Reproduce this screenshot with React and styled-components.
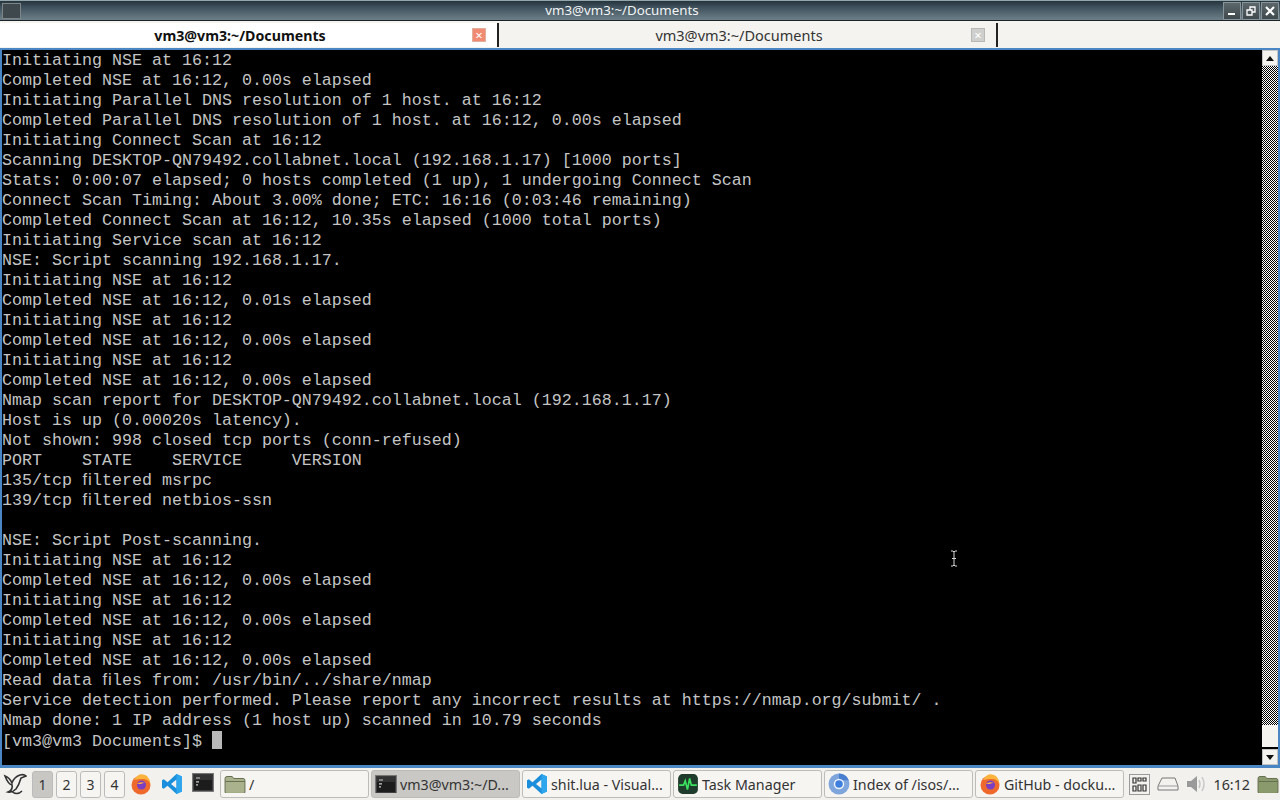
import React from "react";
import styled, { createGlobalStyle } from "styled-components";

const GlobalStyle = createGlobalStyle`
  html, body {
    margin: 0;
    padding: 0;
    background: #000;
    overflow: hidden;
  }
`;

// "ﬁ" is the single-cell ligature the terminal draws in these words
const LINES = [
  "Initiating NSE at 16:12",
  "Completed NSE at 16:12, 0.00s elapsed",
  "Initiating Parallel DNS resolution of 1 host. at 16:12",
  "Completed Parallel DNS resolution of 1 host. at 16:12, 0.00s elapsed",
  "Initiating Connect Scan at 16:12",
  "Scanning DESKTOP-QN79492.collabnet.local (192.168.1.17) [1000 ports]",
  "Stats: 0:00:07 elapsed; 0 hosts completed (1 up), 1 undergoing Connect Scan",
  "Connect Scan Timing: About 3.00% done; ETC: 16:16 (0:03:46 remaining)",
  "Completed Connect Scan at 16:12, 10.35s elapsed (1000 total ports)",
  "Initiating Service scan at 16:12",
  "NSE: Script scanning 192.168.1.17.",
  "Initiating NSE at 16:12",
  "Completed NSE at 16:12, 0.01s elapsed",
  "Initiating NSE at 16:12",
  "Completed NSE at 16:12, 0.00s elapsed",
  "Initiating NSE at 16:12",
  "Completed NSE at 16:12, 0.00s elapsed",
  "Nmap scan report for DESKTOP-QN79492.collabnet.local (192.168.1.17)",
  "Host is up (0.00020s latency).",
  "Not shown: 998 closed tcp ports (conn-refused)",
  "PORT    STATE    SERVICE     VERSION",
  "135/tcp \uFB01ltered msrpc",
  "139/tcp \uFB01ltered netbios-ssn",
  "",
  "NSE: Script Post-scanning.",
  "Initiating NSE at 16:12",
  "Completed NSE at 16:12, 0.00s elapsed",
  "Initiating NSE at 16:12",
  "Completed NSE at 16:12, 0.00s elapsed",
  "Initiating NSE at 16:12",
  "Completed NSE at 16:12, 0.00s elapsed",
  "Read data \uFB01les from: /usr/bin/../share/nmap",
  "Service detection performed. Please report any incorrect results at https://nmap.org/submit/ .",
  "Nmap done: 1 IP address (1 host up) scanned in 10.79 seconds",
];

const TerminalGlyph = ({ size = 22 }) => (
  <svg width={size} height={size * 0.86} viewBox="0 0 22 19">
    <rect x="0.5" y="0.5" width="21" height="18" fill="#3a3a3a" stroke="#777" />
    <rect x="2" y="2" width="18" height="15" fill="#1c1c1c" />
    <path d="M2 2h18v5H2z" fill="#333" />
    <path d="M4 5h4M4 9h3M4 12h2" stroke="#d0d0d0" strokeWidth="1.200" />
  </svg>
);

const FolderGlyph = ({ size = 22, dark }) => (
  <svg width={size} height={size * 0.86} viewBox="0 0 22 19">
    <path
      d="M1 3.500Q1 1.500 3 1.500h5l2 2h9q2 0 2 2V17q0 1.500-1.500 1.500h-17Q1 18.500 1 17z"
      fill={dark ? "#8a9a6c" : "#a9b28d"}
      stroke="#666e50"
    />
    <path d="M1.500 6.500h19.500" stroke="#666e50" />
  </svg>
);

const FirefoxGlyph = ({ size = 22 }) => (
  <svg width={size} height={size} viewBox="0 0 22 22">
    <circle cx="11" cy="12" r="9.500" fill="#f0692c" />
    <path d="M4 7Q9 -2 17 3Q20 6 20.500 11Q18 6 13 6Q8 6 4 7z" fill="#fbb33c" />
    <circle cx="11.500" cy="12" r="4.500" fill="#7b3fbf" />
    <path d="M7 11Q10 8 15 10Q13 9.500 11 11z" fill="#ffb13a" />
  </svg>
);

const VscodeGlyph = ({ size = 22 }) => (
  <svg width={size} height={size} viewBox="0 0 22 22">
    <path
      d="M15.500 1L21 3.500V18.500L15.500 21L6.500 12.800L2.800 15.700L1 14.800V7.200L2.800 6.300L6.500 9.200zM15.500 6.500L10 11L15.500 15.500z"
      fill="#1b8fdc"
    />
    <path d="M15.500 1L21 3.500V18.500L15.500 21z" fill="#2ea6ee" />
  </svg>
);

const ChromiumGlyph = () => (
  <svg width="22" height="22" viewBox="0 0 20 20">
    <circle cx="10" cy="10" r="9.500" fill="#7fa6dc" />
    <path d="M10 .5A9.500 9.500 0 0 1 18.800 6.500H10z" fill="#4a7fd0" />
    <circle cx="10" cy="10" r="4.800" fill="#eef3fb" />
    <circle cx="10" cy="10" r="3.400" fill="#3e7fde" />
  </svg>
);

const TaskManagerGlyph = () => (
  <svg width="22" height="22" viewBox="0 0 20 20">
    <rect x="1" y="1" width="18" height="18" rx="4" fill="#1f3b2b" />
    <path d="M2 11h4l1.500-4 2 8 2-10 1.500 6h5" stroke="#3ce05f" strokeWidth="1.500" fill="none" />
  </svg>
);

const StartGlyph = () => (
  <svg width="24" height="26" viewBox="0 0 24 26" fill="none" stroke="#333" strokeWidth="1.600">
    <path d="M2 5Q7 7 9 12Q11 6 17 4Q21 3 23 5L18 7Q16 14 13 18Q9 22 5 21Q10 19 9 14Q5 13 2 5z" />
    <path d="M8 20Q14 25 19 20" />
  </svg>
);

const KeyboardGlyph = () => (
  <svg width="21" height="21" viewBox="0 0 21 21">
    <rect x="0.500" y="0.500" width="20" height="20" fill="#f4f2ee" stroke="#9a9a9a" />
    <path d="M4 4h3v5H4zM9 4h3v3H9zM14 4h3v3h-3zM4 12h3v5H4zM9 11h3v6H9zM14 11h3v6h-3z" fill="none" stroke="#333" strokeWidth="1.200" />
  </svg>
);

const TrayGlyph = () => (
  <svg width="22" height="14" viewBox="0 0 22 14">
    <path d="M5 1h13l3 8v4H1V9z" fill="#f4f2ee" stroke="#777" />
    <path d="M1 9h20" stroke="#999" />
  </svg>
);

const VolumeGlyph = () => (
  <svg width="21" height="20" viewBox="0 0 21 20">
    <path d="M1 7h4l6-5v16l-6-5H1z" fill="#9a9a9a" />
    <path d="M13 6q2 4 0 8M16 3q4 7 0 14" stroke="#c7c7c7" strokeWidth="1.500" fill="none" />
  </svg>
);

const App = () => (
  <Screen>
    <GlobalStyle />
    <TitleBar>
      <WindowIcon />
      <WindowTitle>vm3@vm3:~/Documents</WindowTitle>
      <WindowButtons>
        <WindowButton>
          <svg width="10" height="10" viewBox="0 0 10 10">
            <path d="M1 8h7" stroke="#fff" strokeWidth="2" />
          </svg>
        </WindowButton>
        <WindowButton>
          <svg width="10" height="10" viewBox="0 0 10 10" fill="none" stroke="#fff" strokeWidth="1.300">
            <path d="M1 4h5v5H1zM4 4V1h5v5H6" />
          </svg>
        </WindowButton>
        <WindowButton>
          <svg width="10" height="10" viewBox="0 0 10 10">
            <path d="M1 1l8 8M9 1l-8 8" stroke="#fff" strokeWidth="2.200" />
          </svg>
        </WindowButton>
      </WindowButtons>
    </TitleBar>

    <TabBar>
      <Tab $active>
        <TabLabel $active>vm3@vm3:~/Documents</TabLabel>
        <TabClose $active>×</TabClose>
      </Tab>
      <Tab>
        <TabLabel>vm3@vm3:~/Documents</TabLabel>
        <TabClose>×</TabClose>
      </Tab>
    </TabBar>

    <TerminalFrame>
      <Output>
        {LINES.map((line, i) => (
          <Line key={i}>{line}</Line>
        ))}
        <Line>
          [vm3@vm3 Documents]$ <Caret />
        </Line>
      </Output>
      <Scrollbar>
        <ScrollButton>
          <svg width="8" height="5" viewBox="0 0 8 5">
            <path d="M0 5L4 0l4 5z" fill="#111" />
          </svg>
        </ScrollButton>
        <ScrollTrack>
          <ScrollThumb />
        </ScrollTrack>
        <ScrollButton>
          <svg width="8" height="5" viewBox="0 0 8 5">
            <path d="M0 0l4 5 4-5z" fill="#111" />
          </svg>
        </ScrollButton>
      </Scrollbar>
      <MouseCursor width="8" height="17" viewBox="0 0 8 17">
        <path d="M1 1h2l1 1 1-1h2M4 2v13M1 16h2l1-1 1 1h2M2 8.500h4" stroke="#d8d8d8" fill="none" />
      </MouseCursor>
    </TerminalFrame>

    <Taskbar>
      <StartButton>
        <StartGlyph />
      </StartButton>
      <Pager>
        {[1, 2, 3, 4].map((n) => (
          <PagerButton key={n} $active={n === 1}>
            {n}
          </PagerButton>
        ))}
      </Pager>
      <Launchers>
        <Launcher>
          <FirefoxGlyph />
        </Launcher>
        <Launcher>
          <VscodeGlyph />
        </Launcher>
        <Launcher>
          <TerminalGlyph />
        </Launcher>
      </Launchers>
      <TaskList>
        <Task>
          <FolderGlyph />
          <TaskText>/</TaskText>
        </Task>
        <Task $active>
          <TerminalGlyph />
          <TaskText>vm3@vm3:~/D...</TaskText>
        </Task>
        <Task>
          <VscodeGlyph />
          <TaskText>shit.lua - Visual...</TaskText>
        </Task>
        <Task>
          <TaskManagerGlyph />
          <TaskText>Task Manager</TaskText>
        </Task>
        <Task>
          <ChromiumGlyph />
          <TaskText>Index of /isos/...</TaskText>
        </Task>
        <Task>
          <FirefoxGlyph />
          <TaskText>GitHub - docku...</TaskText>
        </Task>
      </TaskList>
      <Tray>
        <KeyboardGlyph />
        <TrayGlyph />
        <VolumeGlyph />
        <Clock>16:12</Clock>
        <FolderGlyph dark />
      </Tray>
    </Taskbar>
  </Screen>
);

const Screen = styled.div`
  width: 1280px;
  height: 800px;
  display: flex;
  flex-direction: column;
  overflow: hidden;
  background: #f2f1ee;
  font-family: "Noto Sans", sans-serif;
`;

const TitleBar = styled.div`
  height: 21px;
  flex: none;
  display: flex;
  align-items: center;
  background: linear-gradient(#26343d 0%, #3d4f5a 30%, #6d8089 100%);
  border-top: 1px solid #93a6ac;
  border-bottom: 1px solid #1a2226;
  box-sizing: border-box;
`;

const WindowIcon = styled.div`
  width: 19px;
  height: 16px;
  margin-left: 2px;
  flex: none;
  background: #3f484c;
  border: 1px solid #7c8689;
  box-sizing: border-box;
`;

const WindowTitle = styled.div`
  flex: 1;
  text-align: center;
  color: #f2f4f5;
  font-size: 13.3px;
  line-height: 19px;
`;

const WindowButtons = styled.div`
  display: flex;
  gap: 1px;
  padding-right: 1px;
`;

const WindowButton = styled.div`
  width: 18px;
  height: 18px;
  display: flex;
  align-items: center;
  justify-content: center;
  background: linear-gradient(#5c676c, #3f494e);
  border: 1px solid #87949a;
  box-sizing: border-box;
`;

const TabBar = styled.div`
  height: 27px;
  flex: none;
  display: flex;
  background: #f4f3f0;
`;

const Tab = styled.div`
  width: 499px;
  height: 24px;
  margin: 2px 0 1px;
  padding-left: 8px;
  box-sizing: border-box;
  display: flex;
  align-items: center;
  background: ${(p) => (p.$active ? "#ffffff" : "#f4f3f0")};
  border-right: 2px solid #222;
`;

const TabLabel = styled.div`
  flex: 1;
  text-align: center;
  font-size: ${(p) => (p.$active ? "14.2px" : "14.5px")};
  font-weight: ${(p) => (p.$active ? 700 : 400)};
  color: ${(p) => (p.$active ? "#111" : "#333")};
`;

const TabClose = styled.div`
  width: 14px;
  height: 14px;
  margin-left: 0;
  margin-right: 11px;
  flex: none;
  display: flex;
  align-items: center;
  justify-content: center;
  font-size: 13px;
  line-height: 14px;
  box-sizing: border-box;
  color: #fff;
  background: ${(p) => (p.$active ? "#f08a72" : "#cfcfcd")};
  border: 1px solid ${(p) => (p.$active ? "#e0b09c" : "#b8b8b6")};
`;

const TerminalFrame = styled.div`
  flex: 1;
  min-height: 0;
  display: flex;
  position: relative;
  background: #000;
  border: 2px solid #4a86c4;
  border-bottom-width: 3px;
  box-sizing: border-box;
`;

const Output = styled.div`
  flex: 1;
  min-width: 0;
  overflow: hidden;
  padding-top: 1px;
  color: #c4c4c4;
  font-family: "Liberation Mono", monospace;
  font-size: 16.67px;
  line-height: 20px;
`;

const Line = styled.div`
  height: 20px;
  white-space: pre;
`;

const Caret = styled.span`
  display: inline-block;
  width: 10px;
  height: 18px;
  vertical-align: -3px;
  background: #b8b8b8;
`;

const Scrollbar = styled.div`
  width: 16px;
  flex: none;
  display: flex;
  flex-direction: column;
`;

const ScrollButton = styled.div`
  height: 16px;
  flex: none;
  display: flex;
  align-items: center;
  justify-content: center;
  background: #f4f3f0;
  border: 1px solid #c4c4c4;
  box-sizing: border-box;
`;

const ScrollTrack = styled.div`
  flex: 1;
  display: flex;
  flex-direction: column;
  justify-content: flex-end;
  background: conic-gradient(#fff 25%, #000 0 50%, #fff 0 75%, #000 0) 0 0 / 2px 2px;
`;

const ScrollThumb = styled.div`
  height: 22px;
  background: #f4f3f0;
  border-bottom: 2px solid #000;
`;

const MouseCursor = styled.svg`
  position: absolute;
  left: 948px;
  top: 500px;
`;

const Taskbar = styled.div`
  height: 32px;
  flex: none;
  display: flex;
  align-items: center;
  background: #f2f1ee;
  padding: 2px 0;
  box-sizing: border-box;
`;

const StartButton = styled.div`
  width: 30px;
  flex: none;
  display: flex;
  justify-content: center;
`;

const Pager = styled.div`
  display: flex;
  gap: 3px;
  margin-left: 2px;
`;

const PagerButton = styled.div`
  width: 21px;
  height: 27px;
  display: flex;
  align-items: center;
  justify-content: center;
  box-sizing: border-box;
  font-size: 14px;
  color: #333;
  border: 1px solid #bbb;
  border-radius: 3px;
  background: ${(p) => (p.$active ? "#c8c7c3" : "#f6f5f2")};
`;

const Launchers = styled.div`
  display: flex;
  gap: 9px;
  margin-left: 5px;
`;

const Launcher = styled.div`
  width: 22px;
  display: flex;
  justify-content: center;
`;

const TaskList = styled.div`
  display: flex;
  gap: 2px;
  margin-left: 6px;
`;

const Task = styled.div`
  width: 149px;
  height: 28px;
  display: flex;
  align-items: center;
  gap: 3px;
  padding: 0 2px 0 3px;
  box-sizing: border-box;
  border: 1px solid #bcbcb8;
  border-radius: 3px;
  overflow: hidden;
  background: ${(p) => (p.$active ? "#c9c8c4" : "#f6f5f2")};
  flex: none;
`;

const TaskText = styled.span`
  font-size: 14.25px;
  color: #333;
  white-space: nowrap;
`;

const Tray = styled.div`
  flex: 1;
  display: flex;
  align-items: center;
  justify-content: flex-end;
  gap: 7px;
  padding-right: 1px;
`;

const Clock = styled.span`
  font-size: 14.25px;
  color: #333;
`;

export default App;
